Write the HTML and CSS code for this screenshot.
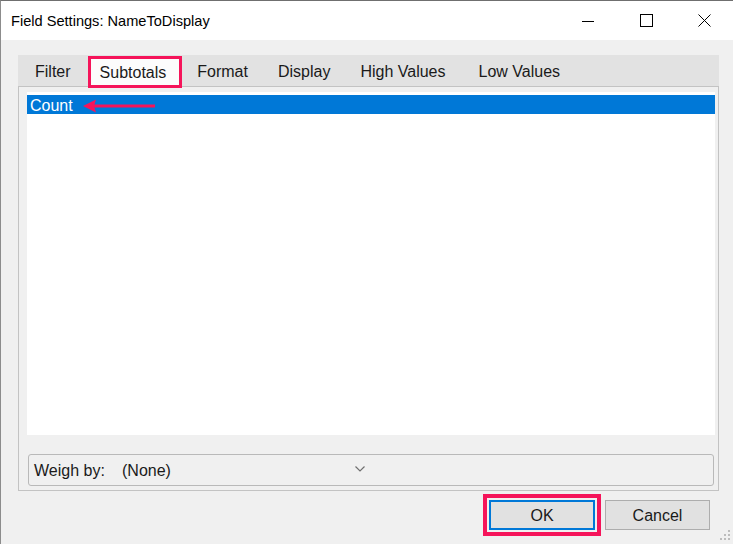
FILE: index.html
```html
<!DOCTYPE html>
<html lang="en">
<head>
  <meta charset="UTF-8">
  <title>Field Settings: NameToDisplay</title>
  <link rel="stylesheet" href="styles.css">
</head>
<body>
  <div class="window">
    <div class="titlebar">
      <span class="title">Field Settings: NameToDisplay</span>
      <div class="controls">
        <span class="ctl">
          <svg width="12" height="12" viewBox="0 0 12 12"><line x1="0" y1="6.5" x2="12" y2="6.5" stroke="#000" stroke-width="1"/></svg>
        </span>
        <span class="ctl">
          <svg width="13" height="13" viewBox="0 0 13 13"><rect x="0.5" y="0.5" width="12" height="12" fill="none" stroke="#000" stroke-width="1"/></svg>
        </span>
        <span class="ctl">
          <svg width="13" height="13" viewBox="0 0 13 13"><path d="M0.5 0.5 L12.5 12.5 M12.5 0.5 L0.5 12.5" stroke="#000" stroke-width="1"/></svg>
        </span>
      </div>
    </div>

    <div class="client">
      <div class="tabs">
        <div class="tab first">Filter</div>
        <div class="tab active">Subtotals</div>
        <div class="tab">Format</div>
        <div class="tab">Display</div>
        <div class="tab">High Values</div>
        <div class="tab last">Low Values</div>
      </div>

      <div class="panel">
        <div class="listbox">
          <div class="item selected">Count</div>
          <!-- annotation arrow -->
          <svg class="arrow" width="74" height="16" viewBox="0 0 74 16">
            <line x1="10" y1="8" x2="72" y2="8" stroke="#f5145a" stroke-width="3"/>
            <polygon points="0,8 13,1.5 11,8 13,14.5" fill="#f5145a"/>
          </svg>
        </div>

        <div class="combo">
          <span class="combo-label">Weigh by:</span>
          <span class="combo-value">(None)</span>
          <svg class="chevron" width="10" height="6" viewBox="0 0 10 6"><path d="M0.5 0.5 L5 5 L9.5 0.5" fill="none" stroke="#707070" stroke-width="1.2"/></svg>
        </div>
      </div>

      <div class="buttons">
        <div class="btn ok">OK</div>
        <div class="btn">Cancel</div>
      </div>
    </div>

    <svg class="grip" width="11" height="11" viewBox="0 0 11 11">
      <rect x="8" y="0" width="2" height="2" fill="#bcbcbc"/>
      <rect x="4" y="4" width="2" height="2" fill="#bcbcbc"/>
      <rect x="8" y="4" width="2" height="2" fill="#bcbcbc"/>
      <rect x="0" y="8" width="2" height="2" fill="#bcbcbc"/>
      <rect x="4" y="8" width="2" height="2" fill="#bcbcbc"/>
      <rect x="8" y="8" width="2" height="2" fill="#bcbcbc"/>
    </svg>
  </div>
</body>
</html>
```

FILE: styles.css
```css
* {
  margin: 0;
  padding: 0;
  box-sizing: border-box;
}

body {
  font-family: "Liberation Sans", Arial, sans-serif;
  background: #f0f0f0;
  color: #1a1a1a;
  width: 733px;
  height: 544px;
  overflow: hidden;
}

.window {
  position: relative;
  width: 733px;
  height: 544px;
  border-top: 1px solid #6f6f6f;
  border-left: 1px solid #8c8c8c;
  background: #f0f0f0;
}

/* ===== Title bar ===== */
.titlebar {
  height: 39px;
  background: #fff;
  display: flex;
  align-items: center;
  padding-left: 10px;
}

.title {
  font-size: 14.6px;
  color: #000;
}

.controls {
  margin-left: auto;
  display: flex;
  height: 100%;
}

.ctl {
  width: 58px;
  height: 39px;
  display: flex;
  align-items: center;
  justify-content: center;
}

/* ===== Client area ===== */
.client {
  padding: 15px 14px 0 17px;
}

.tabs {
  display: flex;
  align-items: flex-start;
  height: 31px;
  background: #e2e2e2;
  font-size: 16px;
}

.tab {
  height: 31px;
  line-height: 33px;
  padding: 0 15px;
  color: #1a1a1a;
  white-space: nowrap;
}

.tab.first {
  padding-left: 17px;
}

.tab.last {
  padding-left: 18px;
}

.tab.active {
  position: relative;
  z-index: 1;
  height: 32px;
  margin-top: 1px;
  margin-left: 2px;
  line-height: 27px;
  padding: 0 13px 0 9px;
  background: #fcfcfc;
  border: 3px solid #f5145a;
}

.panel {
  border: 1px solid #c3c3c3;
  height: 405px;
  padding: 5px 3px 0 8px;
}

.listbox {
  position: relative;
  height: 343px;
  background: #fff;
  padding-top: 3px;
}

.item {
  height: 19px;
  line-height: 21px;
  padding-left: 3px;
  font-size: 16px;
}

.item.selected {
  background: #0078d7;
  color: #fff;
}

.arrow {
  position: absolute;
  left: 56px;
  top: 6px;
}

.combo {
  display: flex;
  align-items: center;
  height: 32px;
  margin: 19px 1px 0 1px;
  padding: 2px 0 0 5px;
  border: 1px solid #b9b9b9;
  border-radius: 3px;
  font-size: 16px;
  color: #1a1a1a;
}

.combo-label {
  width: 88px;
}

.combo-value {
  width: 233px;
}

.chevron {
  margin-top: -5px;
}

/* ===== Buttons ===== */
.buttons {
  display: flex;
  justify-content: flex-end;
  gap: 10px;
  margin-top: 9px;
  padding-right: 9px;
}

.btn {
  width: 105px;
  height: 30px;
  line-height: 30px;
  text-align: center;
  font-size: 16px;
  background: #e1e1e1;
  border: 1px solid #adadad;
  color: #1a1a1a;
}

.btn.ok {
  width: 106px;
  line-height: 28px;
  border: 2px solid #0078d7;
  outline: 4px solid #f5145a;
  outline-offset: 2px;
}

.grip {
  position: absolute;
  right: 2px;
  bottom: 3px;
}
```
